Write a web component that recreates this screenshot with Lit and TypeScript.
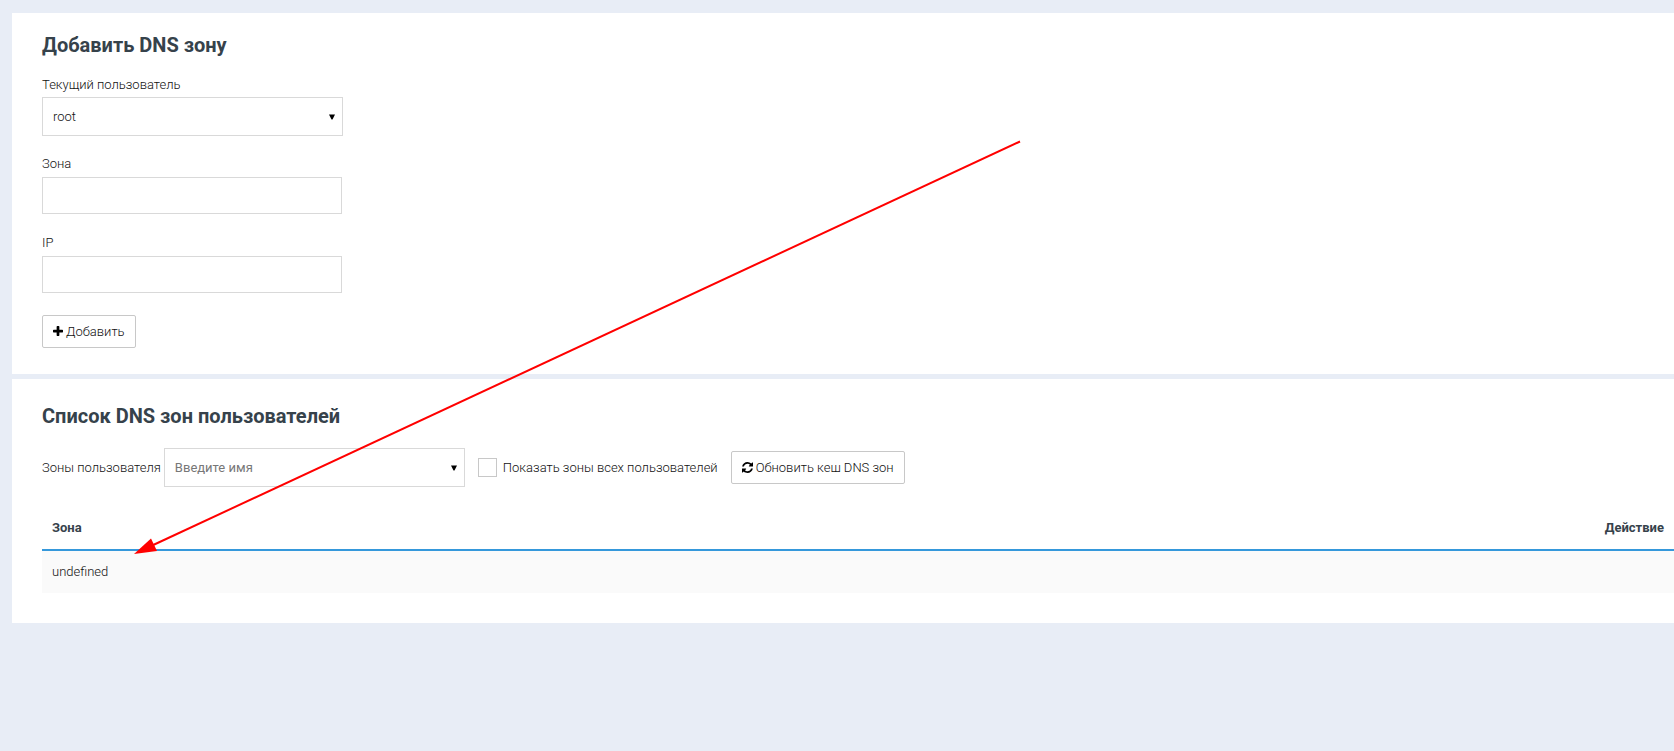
import { LitElement, html, css, svg } from "lit";
import { customElement, state } from "lit/decorators.js";

@customElement("app-root")
export class AppRoot extends LitElement {
  static styles = css`
    :host {
      display: block;
      position: relative;
      box-sizing: border-box;
      min-height: 100vh;
      padding: 13px 0 0 12px;
      overflow: hidden;
      background: #e8edf6;
      color: #111;
      font: 300 13px/20px Roboto, "Liberation Sans", sans-serif;
    }
    *,
    *::before {
      box-sizing: border-box;
    }
    .card {
      background: #fff;
      padding: 18px 0 26px 30px;
    }
    .card + .card {
      margin-top: 5px;
      padding: 23px 0 30px 30px;
    }
    .title {
      margin: 0 0 16px;
      color: #36424b;
      font-size: 20px;
      font-weight: 700;
      line-height: 28px;
    }
    .field {
      display: flex;
      flex-direction: column;
      align-items: flex-start;
      gap: 3px;
      margin-bottom: 19px;
    }
    .field.compact {
      gap: 2px;
      margin-bottom: 18px;
    }
    .input,
    .select {
      font: inherit;
      color: inherit;
      background: #fff;
      border: 1px solid #d9d9d9;
      border-radius: 0;
      margin: 0;
      padding: 0 10px;
    }
    .input {
      width: 300px;
      height: 37px;
    }
    .select-box {
      position: relative;
      display: flex;
      width: 301px;
    }
    .select {
      width: 100%;
      height: 39px;
      appearance: none;
    }
    .select.empty {
      color: #777;
      font-weight: 400;
    }
    .caret {
      position: absolute;
      right: 8px;
      top: 50%;
      width: 6px;
      height: 6px;
      margin-top: -3px;
      pointer-events: none;
    }
    .actions {
      padding-top: 3px;
    }
    .button {
      display: inline-flex;
      align-items: center;
      gap: 3px;
      height: 33px;
      margin: 0;
      padding: 0 10px;
      border: 1px solid #c8c8c8;
      border-radius: 2px;
      background: #fff;
      color: inherit;
      font: inherit;
      white-space: nowrap;
    }
    .icon {
      flex: none;
      height: 13px;
      fill: #000;
    }
    .toolbar {
      display: flex;
      flex-wrap: wrap;
      align-items: center;
      gap: 13px;
      padding-top: 2px;
      margin-bottom: 20px;
    }
    .inline {
      display: flex;
      align-items: center;
      gap: 3px;
    }
    .check {
      display: flex;
      align-items: center;
      gap: 6px;
    }
    .checkbox {
      appearance: none;
      width: 19px;
      height: 19px;
      margin: 0;
      border: 1px solid #c8c8c8;
      background: #fff;
    }
    .checkbox:checked {
      background: #3598db;
    }
    .table {
      width: 100%;
      border-collapse: separate;
      border-spacing: 0;
    }
    .table th,
    .table td {
      padding: 11px 10px;
      text-align: left;
    }
    .table th {
      color: #36424b;
      font-weight: 700;
      border-bottom: 2px solid #3598db;
    }
    .table td {
      background: #fafafa;
    }
    .table .action {
      text-align: right;
    }
    .arrow {
      position: absolute;
      left: 0;
      top: 0;
      width: 1100px;
      height: 600px;
      pointer-events: none;
    }
  `;

  @state() private zones: string[] = ["undefined"];

  private caret() {
    return html`<svg class="caret" viewBox="0 0 6 6" aria-hidden="true">
      <path d="M0 .5h6L3.5 5.5h-1z" />
    </svg>`;
  }

  private arrow() {
    return html`<svg class="arrow" viewBox="0 0 1100 600" aria-hidden="true">
      ${svg`<path d="M1020 141.5 150 546.5" stroke="#f00" stroke-width="2" fill="none" />
      <path d="M134 554 151 538.5 157 551z" fill="#f00" />`}
    </svg>`;
  }

  render() {
    return html`
      <section class="card">
        <h2 class="title">Добавить DNS зону</h2>
        <div class="field compact">
          <label for="user">Текущий пользователь</label>
          <div class="select-box">
            <select class="select" id="user"><option>root</option></select>
            ${this.caret()}
          </div>
        </div>
        <div class="field">
          <label for="zone">Зона</label>
          <input class="input" id="zone" type="text" />
        </div>
        <div class="field">
          <label for="ip">IP</label>
          <input class="input" id="ip" type="text" />
        </div>
        <div class="actions">
          <button class="button" type="button">
            <svg class="icon" viewBox="0 0 1408 1792" width="10" aria-hidden="true">
              <path d="M1408 736v192q0 40-28 68t-68 28H896v416q0 40-28 68t-68 28H608q-40 0-68-28t-28-68v-416H96q-40 0-68-28t-28-68V736q0-40 28-68t68-28h416V224q0-40 28-68t68-28h192q40 0 68 28t28 68v416h416q40 0 68 28t28 68z" />
            </svg>
            Добавить
          </button>
        </div>
      </section>

      <section class="card">
        <h2 class="title">Список DNS зон пользователей</h2>
        <div class="toolbar">
          <div class="inline">
            <label for="owner">Зоны пользователя</label>
            <div class="select-box">
              <select class="select empty" id="owner"><option>Введите имя</option></select>
              ${this.caret()}
            </div>
          </div>
          <label class="check">
            <input class="checkbox" type="checkbox" />
            Показать зоны всех пользователей
          </label>
          <button class="button" type="button">
            <svg class="icon" viewBox="0 0 1536 1792" width="11" aria-hidden="true">
              <path d="M1511 1056q0 5-1 7-64 268-268 434.500T764 1664q-146 0-282.500-55T238 1452l-129 129q-19 19-45 19t-45-19-19-45v-448q0-26 19-45t45-19h448q26 0 45 19t19 45-19 45l-137 137q71 66 161 102t187 36q134 0 250-65t186-179q11-17 53-117 8-23 30-23h192q13 0 22.500 9.500t9.500 22.500zM1536 256v448q0 26-19 45t-45 19h-448q-26 0-45-19t-19-45 19-45l138-138Q969 384 768 384q-134 0-250 65T332 628q-11 17-53 117-8 23-30 23H50q-13 0-22.500-9.500T18 736v-7q65-268 270-434.500T768 128q146 0 284 55.500T1297 340l130-129q19-19 45-19t45 19 19 45z" />
            </svg>
            Обновить кеш DNS зон
          </button>
        </div>
        <table class="table">
          <thead>
            <tr>
              <th scope="col">Зона</th>
              <th scope="col" class="action">Действие</th>
            </tr>
          </thead>
          <tbody>
            ${this.zones.map(
              (zone) => html`<tr><td>${zone}</td><td class="action"></td></tr>`
            )}
          </tbody>
        </table>
      </section>
      ${this.arrow()}
    `;
  }
}
